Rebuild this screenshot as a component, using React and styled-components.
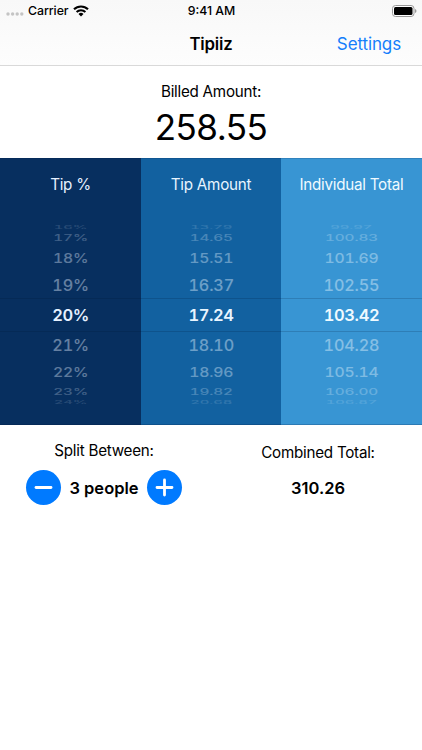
import React from "react";
import styled, { createGlobalStyle } from "styled-components";

const GlobalStyle = createGlobalStyle`
    * {
        box-sizing: border-box;
    }
    body {
        margin: 0;
        background: #ffffff;
        color: #000000;
        font-family: Inter, "Liberation Sans", sans-serif;
        overflow: hidden;
    }
`;

const Screen = styled.div`
    width: 422px;
    height: 750px;
    background: #ffffff;
    display: flex;
    flex-direction: column;
`;

const Header = styled.header`
    height: 66px;
    flex: none;
    background: linear-gradient(#f8f8f8, #fdfdfd);
    border-bottom: 1px solid #d9d9d9;
`;

const StatusBar = styled.div`
    height: 21px;
    display: grid;
    grid-template-columns: 1fr auto 1fr;
    align-items: center;
    padding: 0 5px 0 6px;
`;

const Carrier = styled.div`
    display: flex;
    align-items: center;
    svg:first-child {
        margin: 7px 4px 0 0;
    }
    svg:last-child {
        margin-left: 4px;
    }
`;

const Battery = styled.svg`
    justify-self: end;
`;

const NavBar = styled.div`
    height: 45px;
    display: grid;
    grid-template-columns: 1fr auto 1fr;
    align-items: center;
    padding: 0 21px;
`;

const Text = styled.span`
    font-size: ${(props) => props.$size}px;
    font-weight: ${(props) => props.$weight || 400};
    letter-spacing: ${(props) => props.$spacing || 0}px;
    line-height: ${(props) => props.$line || 20}px;
    color: ${(props) => props.$color || "inherit"};
    white-space: nowrap;
`;

const Label = styled(Text).attrs({ $size: 15.2, $spacing: -0.25 })``;

const NavTitle = styled(Text)`
    grid-column: 2;
`;

const NavLink = styled(Text)`
    justify-self: end;
`;

const Bill = styled.section`
    height: 92px;
    flex: none;
    display: flex;
    flex-direction: column;
    align-items: center;
    padding-top: 16px;
`;

const Picker = styled.section`
    height: 267px;
    flex: none;
    display: grid;
    grid-template-columns: 141px 140px 141px;
`;

const Column = styled.div`
    background: ${(props) => props.$bg};
    color: ${(props) => props.$ink};
    border-top: 1px solid rgba(0, 20, 60, 0.14);
    border-bottom: 1px solid rgba(0, 20, 60, 0.2);
    display: flex;
    flex-direction: column;
    align-items: center;
    padding-top: 16px;
`;

const Wheel = styled.div`
    width: 100%;
    margin-top: 27px;
    font-variant-numeric: tabular-nums;
`;

const Row = styled.div`
    height: ${(props) => props.$height}px;
    display: flex;
    align-items: center;
    justify-content: center;
`;

const SelectedRow = styled(Row)`
    border-top: 1px solid rgba(0, 15, 40, 0.17);
    border-bottom: 1px solid rgba(0, 15, 40, 0.17);
`;

const Value = styled(Text)`
    opacity: ${(props) => props.$opacity};
    transform: scale(${(props) => props.$sx}, ${(props) => props.$sy});
`;

const Footer = styled.section`
    display: grid;
    grid-template-columns: 208px 214px;
    column-gap: 3px;
`;

const Summary = styled.div`
    display: flex;
    flex-direction: column;
    align-items: center;
    padding-top: ${(props) => props.$top}px;
`;

const Stepper = styled.div`
    display: flex;
    align-items: center;
    justify-content: space-between;
    width: 156px;
    margin-top: 9px;
`;

const RoundButton = styled.button`
    width: 35px;
    height: 35px;
    padding: 0;
    border: 0;
    border-radius: 50%;
    background: #007aff;
    display: flex;
    align-items: center;
    justify-content: center;
`;

const Total = styled(Text)`
    margin-top: 15px;
`;

// each row flattens and fades as it turns away from the middle
const rows = [
    { height: 9, sx: 0.9, sy: 0.26, opacity: 0.14 },
    { height: 14, sx: 0.93, sy: 0.52, opacity: 0.25 },
    { height: 26, sx: 0.95, sy: 0.78, opacity: 0.38 },
    { height: 27, sx: 0.98, sy: 0.93, opacity: 0.42 },
    { height: 34, sx: 1, sy: 1, opacity: 1 },
    { height: 26, sx: 0.98, sy: 0.93, opacity: 0.42 },
    { height: 27, sx: 0.95, sy: 0.78, opacity: 0.38 },
    { height: 13, sx: 0.93, sy: 0.52, opacity: 0.25 },
    { height: 8, sx: 0.9, sy: 0.26, opacity: 0.14 },
];

const columns = [
    {
        title: "Tip %",
        bg: "#072f5f",
        ink: "#e6f1ff",
        values: ["16%", "17%", "18%", "19%", "20%", "21%", "22%", "23%", "24%"],
    },
    {
        title: "Tip Amount",
        bg: "#1261a0",
        ink: "#e8f5ff",
        values: ["13.79", "14.65", "15.51", "16.37", "17.24", "18.10", "18.96", "19.82", "20.68"],
    },
    {
        title: "Individual Total",
        bg: "#3895d3",
        ink: "#effaff",
        values: ["99.97", "100.83", "101.69", "102.55", "103.42", "104.28", "105.14", "106.00", "106.87"],
    },
];

const PickerColumn = ({ title, bg, ink, values }) => {
    return (
        <Column $bg={bg} $ink={ink}>
            <Label>{title}</Label>
            <Wheel>
                {values.map((value, i) => {
                    const { height, ...look } = rows[i];
                    const Item = i === 4 ? SelectedRow : Row;
                    return (
                        <Item key={value} $height={height}>
                            <Value
                                $size={16.5}
                                $weight={i === 4 ? 600 : 500}
                                $spacing={i === 4 ? -0.4 : -0.15}
                                $sx={look.sx}
                                $sy={look.sy}
                                $opacity={look.opacity}
                            >
                                {value}
                            </Value>
                        </Item>
                    );
                })}
            </Wheel>
        </Column>
    );
};

const App = () => {
    return (
        <Screen>
            <GlobalStyle />
            <Header>
                <StatusBar>
                    <Carrier>
                        <svg width="18" height="4" fill="#c4c4c4">
                            <circle cx="2" cy="2" r="1.7" />
                            <circle cx="6.6" cy="2" r="1.7" />
                            <circle cx="11.2" cy="2" r="1.7" />
                            <circle cx="15.8" cy="2" r="1.7" />
                        </svg>
                        <Text $size={12.3} $weight={500} $spacing={-0.05}>Carrier</Text>
                        <svg width="16" height="12" viewBox="0 0 16 12">
                            <path d="M1 4.3a10 10 0 0 1 14 0" fill="none" stroke="#000" strokeWidth="2.1" />
                            <path d="M3.6 7a6.2 6.2 0 0 1 8.8 0" fill="none" stroke="#000" strokeWidth="2" />
                            <path d="M8 11.4 5.5 8.9a3.6 3.6 0 0 1 5 0z" />
                        </svg>
                    </Carrier>
                    <Text $size={12.3} $weight={500}>9:41 AM</Text>
                    <Battery width="25" height="12" viewBox="0 0 25 12">
                        <rect x="0.5" y="0.5" width="21.5" height="11" rx="3" fill="#fff" stroke="#999" />
                        <rect x="2" y="2" width="18.5" height="8" rx="1.5" />
                        <path d="M23 4v4q1.5-.7 1.5-2T23 4" fill="#999" />
                    </Battery>
                </StatusBar>
                <NavBar>
                    <NavTitle $size={16.8} $weight={600} $spacing={-0.2}>Tipiiz</NavTitle>
                    <NavLink $size={17} $spacing={-0.12} $color="#157efb">Settings</NavLink>
                </NavBar>
            </Header>
            <Bill>
                <Label>Billed Amount:</Label>
                <Text $size={35} $line={50} $spacing={-0.5}>258.55</Text>
            </Bill>
            <Picker>
                {columns.map((column) => (
                    <PickerColumn key={column.title} {...column} />
                ))}
            </Picker>
            <Footer>
                <Summary $top={16}>
                    <Label>Split Between:</Label>
                    <Stepper>
                        <RoundButton aria-label="Remove person">
                            <svg width="19" height="19" stroke="#fff" strokeWidth="2.8" strokeLinecap="round">
                                <path d="M2 9.5h15" />
                            </svg>
                        </RoundButton>
                        <Text $size={16.5} $weight={600}>3 people</Text>
                        <RoundButton aria-label="Add person">
                            <svg width="19" height="19" stroke="#fff" strokeWidth="2.8" strokeLinecap="round">
                                <path d="M2 9.5h15M9.5 2v15" />
                            </svg>
                        </RoundButton>
                    </Stepper>
                </Summary>
                <Summary $top={18}>
                    <Label>Combined Total:</Label>
                    <Total $size={16.5} $weight={600}>310.26</Total>
                </Summary>
            </Footer>
        </Screen>
    );
};

export default App;
